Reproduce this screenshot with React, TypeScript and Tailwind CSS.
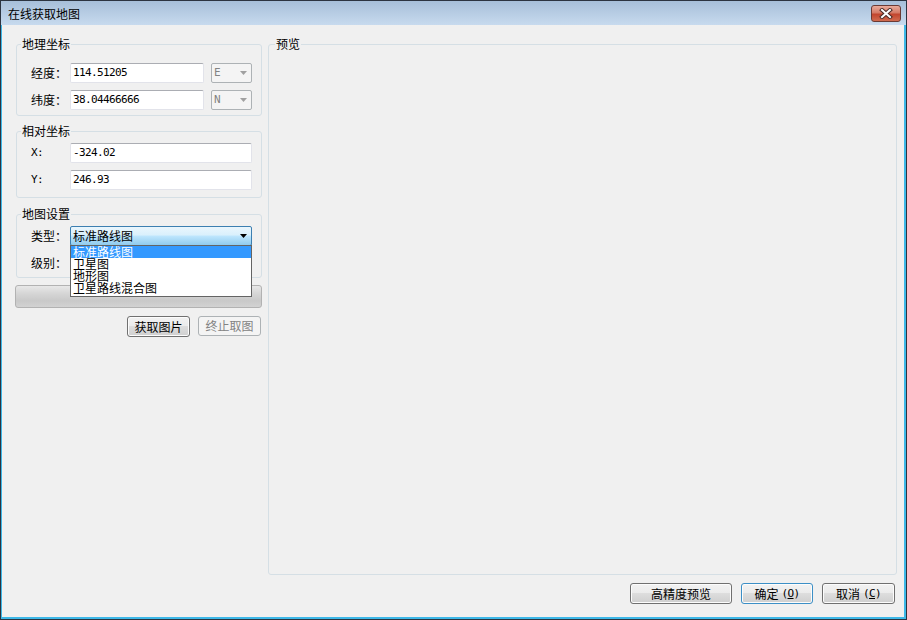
import React from "react";

const cjk = "font-['Noto_Sans_CJK_SC',sans-serif]";
const mono = "font-['DejaVu_Sans_Mono',monospace] text-[11px] tracking-[-0.62px]";

const btn =
  "h-[21px] rounded-[3px] border border-[#707070] bg-[linear-gradient(#f2f2f2,#ebebeb_50%,#dddddd_50%,#cfcfcf)] shadow-[inset_0_0_0_1px_#fcfcfc] text-[12px] leading-none text-black flex items-center justify-center";

function Arrow({ color }: { color: string }) {
  return (
    <svg width="7" height="4" viewBox="0 0 7 4">
      <path d="M0 0h7L3.5 4z" fill={color} />
    </svg>
  );
}

function TextBox({ value, className = "" }: { value: string; className?: string }) {
  return (
    <div
      className={`h-[20px] bg-white border border-[#e2e3ea] border-t-[#abadb3] rounded-[2px] flex items-center pl-[2px] text-black ${mono} ${className}`}
    >
      {value}
    </div>
  );
}

function CoordRow({ label, value, dir }: { label: string; value: string; dir: string }) {
  return (
    <div className="flex items-center h-[20px]">
      <span className="w-[39px] text-[12px] leading-none">{label}</span>
      <TextBox value={value} className="w-[134px]" />
      <div className="ml-[7px] w-[41px] h-[20px] rounded-[2px] border border-[#adb2b5] bg-[#f4f4f4] flex items-center justify-between pl-[2px] pr-[4px]">
        <span className={`${mono} text-[#838383]`}>{dir}</span>
        <Arrow color="#a0a0a0" />
      </div>
    </div>
  );
}

function Group({
  title,
  className,
  children,
}: {
  title: string;
  className: string;
  children: React.ReactNode;
}) {
  return (
    <fieldset className={`border border-[#d5dfe5] rounded-[3px] pl-[14px] pr-[9px] ${className}`}>
      <legend className="-ml-[10px] px-px leading-[14px] text-[12px]">{title}</legend>
      {children}
    </fieldset>
  );
}

export default function App() {
  return (
    <div className={`w-[907px] h-[620px] border border-[#2c3440] bg-[#3db8e8] flex flex-col ${cjk} text-black`}>
      {/* title bar */}
      <div className="h-[24px] shrink-0 bg-[linear-gradient(#a7bfd9,#c7daee)] flex items-start justify-between pl-[7px] pr-[5px]">
        <span className="text-[12px] leading-none mt-[7px]">在线获取地图</span>
        <div className="mt-[4px] w-[30px] h-[17px] rounded-[3px] border border-[#6a3a34] bg-[linear-gradient(#e9ab9b,#d47a66_45%,#c2452e_55%,#d06b50)] flex items-center justify-center">
          <svg width="14" height="11" viewBox="0 0 14 11">
            <path d="M3 2l8 7M11 2l-8 7" stroke="#4a2a26" strokeWidth="4" strokeLinecap="square" />
            <path d="M3 2l8 7M11 2l-8 7" stroke="#ffffff" strokeWidth="2" strokeLinecap="square" />
          </svg>
        </div>
      </div>

      {/* client area */}
      <div className="flex-1 min-h-0 ml-px mr-[2px] mb-[2px] bg-[#f0f0f0] flex flex-col pt-[12px] pl-[14px] pr-[7px] pb-[13px]">
        <div className="flex-1 min-h-0 flex gap-[6px]">
          {/* left column */}
          <div className="w-[246px] shrink-0 flex flex-col">
            <Group title="地理坐标" className="pt-[12px] pb-[5px]">
              <div className="flex flex-col gap-[7px]">
                <CoordRow label="经度：" value="114.51205" dir="E" />
                <CoordRow label="纬度：" value="38.04466666" dir="N" />
              </div>
            </Group>

            <Group title="相对坐标" className="mt-[8px] pt-[5px] pb-[7px]">
              <div className="flex flex-col gap-[7px]">
                <div className="flex items-center h-[20px]">
                  <span className={`w-[39px] ${mono}`}>X:</span>
                  <TextBox value="-324.02" className="flex-1" />
                </div>
                <div className="flex items-center h-[20px]">
                  <span className={`w-[39px] ${mono}`}>Y:</span>
                  <TextBox value="246.93" className="flex-1" />
                </div>
              </div>
            </Group>

            <Group title="地图设置" className="mt-[9px] pt-[5px] pb-[4px]">
              <div className="flex flex-col gap-[7px]">
                <div className="flex items-center h-[20px]">
                  <span className="w-[39px] text-[12px] leading-none">类型：</span>
                  <div className="relative flex-1 h-[20px]">
                    <div className="h-full rounded-[2px] border border-[#3c7fb1] bg-[linear-gradient(#eaf6fd,#d9f0fc_45%,#bee6fd_50%,#8fcbef)] flex items-center justify-between pl-[2px] pr-[4px]">
                      <span className="text-[12px] leading-none">标准路线图</span>
                      <Arrow color="#000000" />
                    </div>
                    <div className="absolute z-10 left-0 right-0 top-[19px] h-[52px] bg-white border border-[#646464] text-[12px] leading-[12px]">
                      <div className="h-[12px] bg-[#3399ff] text-white pl-[2px]">标准路线图</div>
                      <div className="h-[12px] pl-[2px]">卫星图</div>
                      <div className="h-[12px] pl-[2px]">地形图</div>
                      <div className="h-[12px] pl-[2px]">卫星路线混合图</div>
                    </div>
                  </div>
                </div>
                <div className="flex items-center h-[20px]">
                  <span className="w-[39px] text-[12px] leading-none">级别：</span>
                  <div className="flex-1 h-[20px] rounded-[2px] border border-[#707070] bg-[#e9e9e9]" />
                </div>
              </div>
            </Group>

            <div className="mt-[7px] -ml-px h-[23px] w-[247px] rounded-[3px] border border-[#b2b2b2] bg-[linear-gradient(#e8e8e8,#d6d6d6_35%,#c9c9c9_70%,#d2d2d2)]" />

            <div className="mt-[8px] flex justify-end gap-[8px] pr-px">
              <button className={`${btn} w-[63px] h-[20px]`}>获取图片</button>
              <button className="w-[63px] h-[20px] rounded-[3px] border border-[#adb2b5] bg-[#f4f4f4] text-[12px] leading-none text-[#838383] flex items-center justify-center">
                终止取图
              </button>
            </div>
          </div>

          {/* preview */}
          <fieldset className="flex-1 min-w-0 border border-[#d5dfe5] rounded-[3px]">
            <legend className="ml-[6px] px-px leading-[14px] text-[12px]">预览</legend>
          </fieldset>
        </div>

        <div className="mt-[8px] mr-[2px] flex justify-end gap-[9px]">
          <button className={`${btn} w-[102px]`}>高精度预览</button>
          <button className={`${btn} w-[72px] !border-[#3c8fc6] shadow-[inset_0_0_0_1px_#aee6fb]`}>
            确定<span className={`${mono} ml-[3px]`}>(<u>O</u>)</span>
          </button>
          <button className={`${btn} w-[73px]`}>
            取消<span className={`${mono} ml-[3px]`}>(<u>C</u>)</span>
          </button>
        </div>
      </div>
    </div>
  );
}
